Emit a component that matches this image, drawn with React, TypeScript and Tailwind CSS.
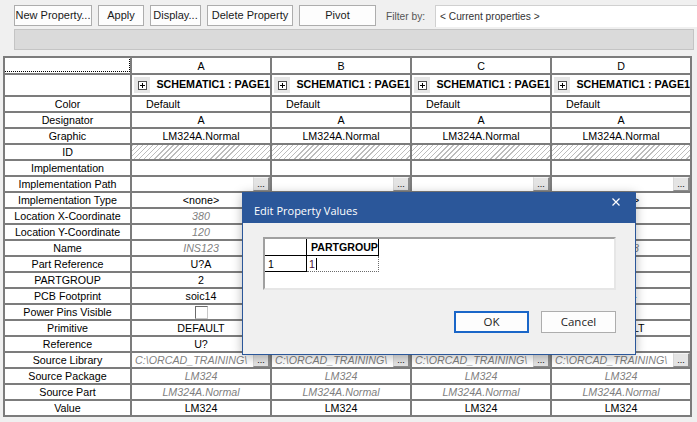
import React from 'react';

type Row = {
  label: string;
  value?: string;
  dim?: boolean;
  left?: boolean;
  hatch?: boolean;
  browse?: boolean;
  checkbox?: boolean;
};

const COLUMNS = ['A', 'B', 'C', 'D'];

const ROWS: Row[] = [
  { label: 'Color', value: 'Default', left: true },
  { label: 'Designator', value: 'A' },
  { label: 'Graphic', value: 'LM324A.Normal' },
  { label: 'ID', hatch: true },
  { label: 'Implementation', value: '' },
  { label: 'Implementation Path', value: '', browse: true },
  { label: 'Implementation Type', value: '<none>' },
  { label: 'Location X-Coordinate', value: '380', dim: true },
  { label: 'Location Y-Coordinate', value: '120', dim: true },
  { label: 'Name', value: 'INS123', dim: true },
  { label: 'Part Reference', value: 'U?A' },
  { label: 'PARTGROUP', value: '2' },
  { label: 'PCB Footprint', value: 'soic14' },
  { label: 'Power Pins Visible', checkbox: true },
  { label: 'Primitive', value: 'DEFAULT' },
  { label: 'Reference', value: 'U?' },
  { label: 'Source Library', value: 'C:\\ORCAD_TRAINING\\', dim: true, left: true, browse: true },
  { label: 'Source Package', value: 'LM324', dim: true },
  { label: 'Source Part', value: 'LM324A.Normal', dim: true },
  { label: 'Value', value: 'LM324' },
];

const cell = 'border-r-2 border-b-2 border-[#7c7c7c] bg-white overflow-hidden whitespace-nowrap';
const rowGrid = 'grid grid-cols-[127px_140px_140px_140px_140px]';

function ToolButton({ label, width }: { label: string; width: string }) {
  return (
    <div
      className={`${width} h-[21px] flex items-center justify-center border border-[#adadad] bg-[#fdfdfd] text-[11px] text-[#1a1a1a] whitespace-nowrap`}
    >
      {label}
    </div>
  );
}

function BrowseButton() {
  return (
    <div className="w-[17px] h-full shrink-0 flex items-end justify-center bg-[#e4e4e4] border-l border-t border-l-[#d8d8d8] border-t-[#f4f4f4] border-r-2 border-b border-r-[#8c8c8c] border-b-[#8c8c8c] text-[9px] leading-[9px] text-black pb-[1px]">
      ...
    </div>
  );
}

function ValueCell({ row }: { row: Row }) {
  if (row.hatch) {
    return (
      <div
        className={`${cell} bg-[repeating-linear-gradient(135deg,#bdbdbd_0px,#bdbdbd_1px,#ffffff_1px,#ffffff_3.6px)]`}
      />
    );
  }
  if (row.checkbox) {
    return (
      <div className={`${cell} flex items-center justify-center`}>
        <div className="w-[13px] h-[13px] bg-white border border-t-[#6b6b6b] border-l-[#6b6b6b] border-r-[#c8c8c8] border-b-[#c8c8c8]" />
      </div>
    );
  }
  const color = row.dim ? 'text-[#7f7f7f] italic' : 'text-black';
  return (
    <div className={`${cell} flex items-stretch`}>
      <div
        className={`flex-1 min-w-0 overflow-hidden flex items-center ${
          row.left ? (row.browse ? 'justify-start pl-[3px]' : 'justify-start pl-[14px]') : 'justify-center'
        } ${color}`}
      >
        {row.value}
      </div>
      {row.browse && <BrowseButton />}
    </div>
  );
}

function PropertyGrid() {
  return (
    <div className="ml-[3px] w-[689px] border-l-2 border-t-2 border-[#7c7c7c] text-[10.7px] leading-[12px] font-['Liberation_Sans',Arial,sans-serif]">
      {/* column letters */}
      <div className={`${rowGrid} h-[17px]`}>
        <div className={`${cell} p-0`}>
          <div className="h-full border border-dotted border-black -ml-[1px] -mt-[1px]" />
        </div>
        {COLUMNS.map((c) => (
          <div key={c} className={`${cell} flex items-center justify-center text-black`}>
            {c}
          </div>
        ))}
      </div>

      {/* page row */}
      <div className={`${rowGrid} h-[22px]`}>
        <div className={cell} />
        {COLUMNS.map((c) => (
          <div key={c} className={`${cell} flex items-start`}>
            <div className="mt-[2px] ml-[2px] w-[17px] h-[16px] bg-[#e6e6e6] flex items-center justify-center">
              <div className="w-[9px] h-[9px] border border-[#4d4d4d] bg-white flex items-center justify-center">
                <svg width="7" height="7" viewBox="0 0 7 7">
                  <path d="M3.5 1v5M1 3.5h5" stroke="#000" strokeWidth="1" />
                </svg>
              </div>
            </div>
            <span className="ml-[6px] mt-[3px] font-bold text-black">SCHEMATIC1 : PAGE1</span>
          </div>
        ))}
      </div>

      {ROWS.map((row) => (
        <div key={row.label} className={`${rowGrid} h-[16px]`}>
          <div className={`${cell} flex items-center justify-center text-black`}>{row.label}</div>
          {COLUMNS.map((c) => (
            <ValueCell key={c} row={row} />
          ))}
        </div>
      ))}
    </div>
  );
}

function EditDialog() {
  return (
    <div className="absolute left-[242px] top-[192px] w-[394px] h-[163px] flex flex-col shadow-[0_2px_10px_rgba(0,0,0,0.28)] font-['Open_Sans','Noto_Sans',sans-serif]">
      {/* title bar */}
      <div className="h-[31px] bg-[#2b579a] flex items-start justify-between">
        <span className="mt-[11px] ml-[12px] text-[11px] leading-[16px] text-white">Edit Property Values</span>
        <svg className="mt-[6px] mr-[16px]" width="8" height="8" viewBox="0 0 8 8">
          <path d="M0.5 0.5l7 7M7.5 0.5l-7 7" stroke="#fff" strokeWidth="1.2" />
        </svg>
      </div>

      {/* body */}
      <div className="flex-1 bg-[#f0f0f0] border-l border-r border-b border-[#2b579a] flex flex-col pt-[14px] pl-[20px] pr-[19px]">
        <div className="h-[53px] bg-white border-2 border-t-[#a0a0a0] border-l-[#a0a0a0] border-r-[#e6e6e6] border-b-[#e6e6e6] font-['Liberation_Sans',Arial,sans-serif] text-[10.6px] leading-[12px]">
          <div className="grid grid-cols-[42px_72px] grid-rows-[17px_16px] w-fit">
            <div className="border-r border-b border-black" />
            <div className="border-r border-b border-black flex items-center pl-[4px] font-bold text-black">PARTGROUP</div>
            <div className="border-r border-b border-black flex items-center pl-[3px] pt-[1px] text-black">1</div>
            <div className="border-r border-b border-dotted border-[#6a6a6a] flex items-center pl-[2px] pt-[1px] text-[#4a1038]">
              1<span className="ml-[1px] w-px h-[12px] bg-black" />
            </div>
          </div>
        </div>

        <div className="mt-[21px] flex justify-end gap-[12px] text-[11.5px] text-[#1e1e1e]">
          <div className="w-[75px] h-[22px] border-2 border-[#1a66c8] bg-[#fdfdfd] flex items-center justify-center">OK</div>
          <div className="w-[75px] h-[22px] border border-[#adadad] bg-[#fdfdfd] flex items-center justify-center">Cancel</div>
        </div>
      </div>
    </div>
  );
}

export default function App() {
  return (
    <div className="relative w-[697px] h-[422px] bg-[#f0f0f0] overflow-hidden font-['Liberation_Sans',Arial,sans-serif]">
      {/* toolbar */}
      <div className="flex items-start pt-[5px] pl-[14px]">
        <ToolButton label="New Property..." width="w-[78px]" />
        <div className="ml-[6px]"><ToolButton label="Apply" width="w-[46px]" /></div>
        <div className="ml-[6px]"><ToolButton label="Display..." width="w-[51px]" /></div>
        <div className="ml-[6px]"><ToolButton label="Delete Property" width="w-[86px]" /></div>
        <div className="ml-[6px]"><ToolButton label="Pivot" width="w-[77px]" /></div>
        <span className="ml-[10px] mt-[4px] w-[39px] text-[10.2px] text-[#555] whitespace-nowrap">Filter by:</span>
        <div className="ml-[10px] flex-1 h-[22px] bg-white border-l border-t border-[#d0d0d0] flex items-center pl-[4px] text-[10.2px] text-[#333]">
          &lt; Current properties &gt;
        </div>
      </div>

      <div className="mt-[2px] ml-[14px] mr-[3px] h-[21px] bg-[#dadada] border border-[#c4c4c4]" />

      <div className="mt-[6px]">
        <PropertyGrid />
      </div>

      <EditDialog />
    </div>
  );
}
